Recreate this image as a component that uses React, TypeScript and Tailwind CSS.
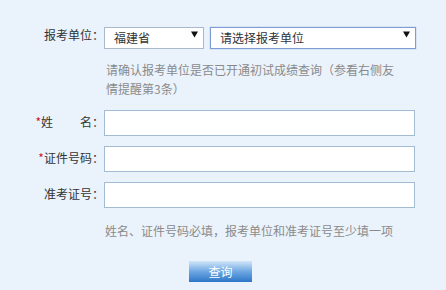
import { useState } from "react";

const font = { fontFamily: '"Noto Sans CJK SC", "Liberation Sans", sans-serif' };

const Label = ({ children, required }: { children: React.ReactNode; required?: boolean }) => (
  <div className="flex h-full items-center justify-end text-[12px] text-[#333]">
    {required && <span className="text-[#d0142c]">*</span>}
    {children}
    <span>：</span>
  </div>
);

const Arrow = () => (
  <svg
    className="pointer-events-none absolute right-[6px] top-[7px]"
    width="7"
    height="7"
    viewBox="0 0 7 7"
  >
    <path d="M0 0.5H7L3.5 6.5Z" fill="#111" />
  </svg>
);

const App = () => {
  const [province, setProvince] = useState("福建省");
  const [unit, setUnit] = useState("");

  return (
    <div className="h-[290px] w-[446px] bg-[#eaf3fc] pt-[24px]" style={font}>
      <div className="grid grid-cols-[104px_1fr]">
        {/* 报考单位 */}
        <div className="h-[22px]">
          <Label>报考单位</Label>
        </div>
        <div className="flex h-[22px] gap-[6px]">
          <div className="relative w-[100px]">
            <select
              value={province}
              onChange={(e) => setProvince(e.target.value)}
              className="h-full w-full appearance-none border border-[#a9b8cb] bg-white pl-[9px] text-[12px] text-[#333] outline-none"
            >
              <option>福建省</option>
            </select>
            <Arrow />
          </div>
          <div className="relative w-[206px]">
            <select
              value={unit}
              onChange={(e) => setUnit(e.target.value)}
              className="h-full w-full appearance-none border border-[#7d9dd3] bg-white pl-[9px] text-[12px] text-[#333] shadow-[0_0_1px_#7d9dd3] outline-none"
            >
              <option value="">请选择报考单位</option>
            </select>
            <Arrow />
          </div>
        </div>

        <div />
        <p className="mt-[14px] w-[300px] pl-[2px] text-[12px] leading-[19px] text-[#8a8a8a]">
          请确认报考单位是否已开通初试成绩查询（参看右侧友情提醒第3条）
        </p>

        {/* 姓名 */}
        <div className="mt-[11px] h-[26px]">
          <Label required>
            <span className="flex w-[51px] justify-between">
              <span>姓</span>
              <span>名</span>
            </span>
          </Label>
        </div>
        <div className="mt-[11px] h-[26px]">
          <input className="h-full w-[311px] border border-[#a3bcd6] bg-white px-1 text-[12px] outline-none" />
        </div>

        {/* 证件号码 */}
        <div className="mt-[10px] h-[26px]">
          <Label required>证件号码</Label>
        </div>
        <div className="mt-[10px] h-[26px]">
          <input className="h-full w-[311px] border border-[#a3bcd6] bg-white px-1 text-[12px] outline-none" />
        </div>

        {/* 准考证号 */}
        <div className="mt-[10px] h-[26px]">
          <Label>准考证号</Label>
        </div>
        <div className="mt-[10px] h-[26px]">
          <input className="h-full w-[311px] border border-[#a3bcd6] bg-white px-1 text-[12px] outline-none" />
        </div>

        <div />
        <p className="mt-[14px] pl-[1px] text-[12px] leading-[19px] text-[#8a8a8a]">
          姓名、证件号码必填，报考单位和准考证号至少填一项
        </p>
      </div>

      <div className="mt-[18px] pl-[189px]">
        <button className="h-[21px] w-[63px] bg-gradient-to-b from-[#d2e6f8] via-[#6ea7e2] to-[#2c76c8] text-[12px] leading-[21px] text-white">
          查询
        </button>
      </div>
    </div>
  );
};

export default App;
